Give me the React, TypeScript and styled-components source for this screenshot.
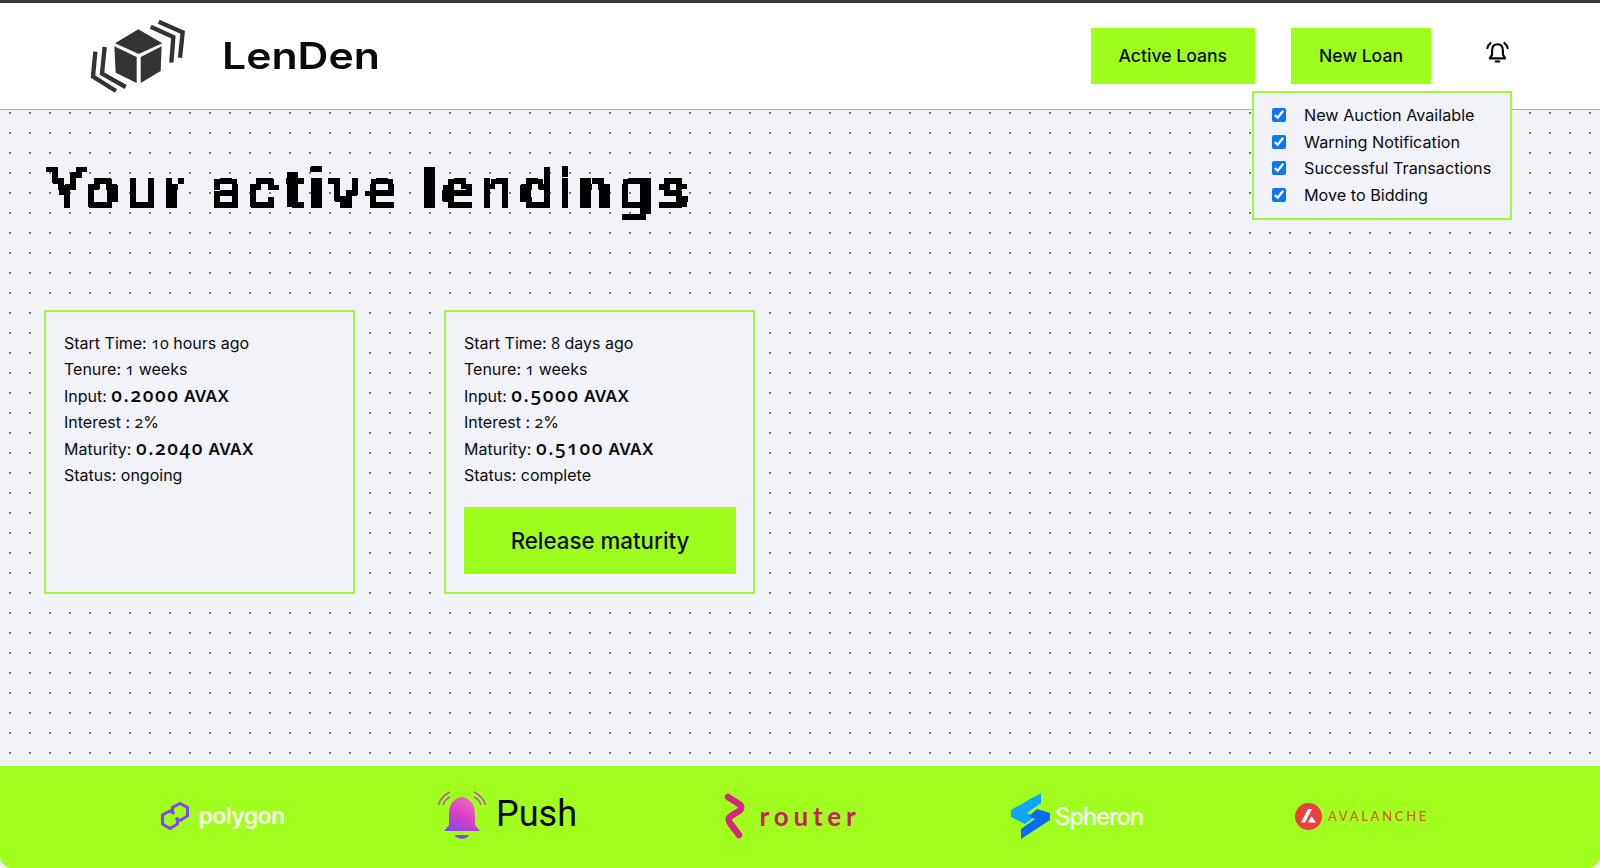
import React from "react";
import styled, { createGlobalStyle } from "styled-components";

const Global = createGlobalStyle`
  html, body { margin: 0; padding: 0; background: #10131c; }
  body { font-family: Inter, "Liberation Sans", sans-serif; color: #0b0b0b; }
  * { box-sizing: border-box; }
`;

const Page = styled.div`
  height: 868px;
  overflow: hidden;
  display: flex;
  flex-direction: column;
  border-top: 3px solid #3a3a3c;
  background-color: #f2f2f9;
  background-image: radial-gradient(circle at 10px 10px, #77777c 0, #77777c 0.9px, transparent 1.3px);
  background-size: 20px 20px;
  background-origin: padding-box;
`;

const Header = styled.header`
  position: relative;
  height: 107px;
  flex: none;
  display: flex;
  align-items: center;
  justify-content: space-between;
  padding: 0 90px 0 80px;
  background: #fff;
  border-bottom: 1px solid #b4b4b8;
`;

const Brand = styled.div`
  display: flex;
  align-items: center;
  gap: 22px;
`;

const BrandName = styled.span`
  display: inline-block;
  margin-top: -2px;
  font-size: 37px;
  font-weight: 600;
  color: #0a0a0a;
  transform: scaleX(1.155);
  transform-origin: left center;
`;

const Nav = styled.nav`
  display: flex;
  align-items: center;
`;

const NavButton = styled.button`
  height: 56px;
  margin-right: 36px;
  padding: 0 28px 2px;
  border: 0;
  background: #9eff1f;
  font: 500 17.6px Inter, "Liberation Sans", sans-serif;
  color: #0b0b0b;
`;

const BellButton = styled.div`
  display: flex;
  margin: -8px 0 0 18px;
`;

const Menu = styled.div`
  position: absolute;
  z-index: 2;
  top: 88px;
  right: 88px;
  width: 260px;
  height: 129px;
  padding: 9px 18px;
  display: flex;
  flex-direction: column;
  background: #f2f2f9;
  border: 2px solid #a4f53f;
`;

const MenuRow = styled.label`
  flex: none;
  height: 26.6px;
  display: flex;
  align-items: center;
  gap: 18px;
  font-size: 16.2px;
  white-space: nowrap;
`;

const Check = styled.input`
  width: 14px;
  height: 14px;
  margin: 0;
  accent-color: #0b76fb;
`;

const Main = styled.main`
  flex: 1;
  padding: 44px 44px 0;
`;

const Title = styled.h1`
  margin: 0 0 84px 2px;
  height: 72px;
  font-family: Inter, sans-serif;
  font-size: 56px;
  font-weight: 600;
  line-height: 72px;
  letter-spacing: 4.9px;
  color: #000;
  white-space: nowrap;
  filter: url(#pixelate);
`;

const Cards = styled.section`
  display: flex;
  gap: 89px;
`;

const Card = styled.article`
  width: 311px;
  height: 284px;
  padding: 17.5px 18px;
  border: 2px solid #a4f53f;
  background: #f2f2f9;
`;

const Line = styled.div`
  height: 26.6px;
  line-height: 26.6px;
  font-size: 16px;
  white-space: nowrap;
`;

const Num = styled.span`
  font-family: "Open Sans", sans-serif;
  font-variant-numeric: oldstyle-nums;
  font-feature-settings: "onum";
  line-height: 0;
`;

const Strong = styled.b`
  font-weight: 600;
  font-size: 16.5px;
  line-height: 0;
  ${Num} {
    font-size: 19px;
    letter-spacing: 1.6px;
  }
`;

const Release = styled.button`
  display: block;
  width: 272px;
  height: 67px;
  margin-top: 17.5px;
  border: 0;
  background: #9eff1f;
  font: 500 22.3px Inter, "Liberation Sans", sans-serif;
  color: #0b0b0b;
`;

const Footer = styled.footer`
  height: 102px;
  flex: none;
  display: grid;
  grid-template-columns: repeat(5, 285px);
  justify-content: center;
  align-items: center;
  padding: 0 16px 0 0;
  background: #a0ff1f;
  border-radius: 0 0 12px 12px;
`;

const Sponsor = styled.div`
  display: flex;
  align-items: center;
  justify-content: center;
  margin-top: -2px;
`;

const PolygonWord = styled.span`
  margin-left: 9px;
  font: 600 23px Inter, sans-serif;
  letter-spacing: -0.6px;
  color: #f8fff0;
`;

const PushWord = styled.span`
  margin: -4px 0 0 9px;
  font: 400 36px Roboto, sans-serif;
  color: #050505;
`;

const RouterWord = styled.span`
  margin-left: 14px;
  font: 700 26px Lato, sans-serif;
  letter-spacing: 4.8px;
  color: #c2265f;
`;

const SpheronWord = styled.span`
  margin-left: 4px;
  font: 500 24px Inter, sans-serif;
  letter-spacing: -1.2px;
  color: #f8fff0;
`;

const AvalancheWord = styled.span`
  margin-left: 6px;
  font: 500 13px Lato, sans-serif;
  letter-spacing: 2.7px;
  color: #dc5a2a;
`;

const HiddenDefs = styled.svg`
  position: absolute;
  width: 0;
  height: 0;
`;

const Logo = () => (
  <svg width="120" height="90" viewBox="0 0 360 270" fill="#333" aria-hidden>
    <polygon points="175,55 247,97 176,129 105,97" />
    <polygon points="103,106 170,138 170,216 107,185" />
    <polygon points="182,138 245,106 242,180 182,216" />
    <g fill="none" stroke="#333" strokeWidth="13">
      <polyline points="236,32 308,64 300,140" />
      <polyline points="212,47 280,78 274,155" />
      <polyline points="46,122 39,197 108,240" />
      <polyline points="74,108 66,188 137,228" />
    </g>
  </svg>
);

const BellIcon = () => (
  <svg width="25" height="25" viewBox="0 0 24 24" fill="none" stroke="#000" strokeWidth="2" aria-hidden>
    <path d="M12 4 C8 4 6.8 7 6.8 10 V14 L4.6 17.6 H19.4 L17.2 14 V10 C17.2 7 16 4 12 4 Z" strokeLinejoin="round" />
    <path d="M10.3 20.6 H13.7" strokeLinecap="round" />
    <path d="M2 8.5 C2.5 6 3.8 3.8 6 2.2" />
    <path d="M22 8.5 C21.5 6 20.2 3.8 18 2.2" />
  </svg>
);

const PolygonIcon = () => (
  <svg width="30" height="28" viewBox="0 0 30 28" fill="none" stroke="#8247e5" strokeWidth="3" strokeLinejoin="miter" aria-hidden>
    <path d="M14.5 11.5 L10 9 L2.5 13 V22 L10 26.5 L17.5 22 V15.5" />
    <path d="M15.5 16.5 L20 18.5 L27.5 14 V5.5 L20 1.5 L12.5 5.5 V12" />
  </svg>
);

const PushIcon = () => (
  <svg width="50" height="52" viewBox="0 0 50 52" fill="none" aria-hidden>
    <defs>
      <linearGradient id="pushGrad" x1="0.8" y1="0.1" x2="0.2" y2="1">
        <stop offset="0" stopColor="#f06ab8" />
        <stop offset="0.5" stopColor="#d93fc6" />
        <stop offset="1" stopColor="#8a47ea" />
      </linearGradient>
    </defs>
    <path d="M25 7 C29 7 30 9 32 10 C37 13 38 19 38 27 V35 L43 41 H7 L12 35 V27 C12 19 13 13 18 10 C20 9 21 7 25 7 Z" fill="url(#pushGrad)" />
    <path d="M18 45 H32 C31 50 19 50 18 45 Z" fill="#8a47ea" />
    <g stroke="#b9609b" strokeWidth="1.6">
      <path d="M1.5 15 C3 9 7 5 13 2" />
      <path d="M6 15 C7 12 9 9 13 7" />
      <path d="M48.5 15 C47 9 43 5 37 2" />
      <path d="M44 15 C43 12 41 9 37 7" />
    </g>
  </svg>
);

const RouterIcon = () => (
  <svg width="22" height="46" viewBox="0 0 22 46" fill="none" aria-hidden>
    <path d="M4 4 L15 11 C18 13 18 16 15 18 L7 23 C4 25 4 27 6 30 L15 42" stroke="#d4277e" strokeWidth="6.5" strokeLinecap="round" />
  </svg>
);

const SpheronIcon = () => (
  <svg width="40" height="46" viewBox="0 0 40 46" aria-hidden>
    <polygon points="30,0 30,10 16,20 24,24 14,31 0,24 0,17" fill="#0ea5ff" />
    <polygon points="39,20 39,27 10,46 10,36 24,26 18,23 26,16" fill="#0b6cf5" />
  </svg>
);

const AvalancheIcon = () => (
  <svg width="27" height="27" viewBox="0 0 27 27" aria-hidden>
    <circle cx="13.5" cy="13.5" r="13.5" fill="#e84142" />
    <polygon points="13,6 17,6 10,19.5 6,19.5" fill="#fff" />
    <polygon points="16.5,13 21,19.5 13,19.5" fill="#fff" />
  </svg>
);

const options = ["New Auction Available", "Warning Notification", "Successful Transactions", "Move to Bidding"];

const LoanCard = ({
  start, input, maturity, status, action,
}: { start: React.ReactNode; input: string; maturity: string; status: string; action?: boolean }) => (
  <Card>
    <Line>Start Time: {start}</Line>
    <Line>Tenure: <Num>1</Num> weeks</Line>
    <Line>Input: <Strong><Num>{input}</Num> AVAX</Strong></Line>
    <Line>Interest : <Num>2</Num>%</Line>
    <Line>Maturity: <Strong><Num>{maturity}</Num> AVAX</Strong></Line>
    <Line>Status: {status}</Line>
    {action && <Release>Release maturity</Release>}
  </Card>
);

export default function App() {
  return (
    <Page>
      <Global />
      <HiddenDefs aria-hidden>
        <filter id="pixelate" x="0" y="0" width="100%" height="100%" colorInterpolationFilters="sRGB">
          <feFlood x="2" y="2" width="2" height="2" />
          <feComposite width="6" height="6" />
          <feTile result="grid" />
          <feComposite in="SourceGraphic" in2="grid" operator="in" />
          <feComponentTransfer>
            <feFuncA type="discrete" tableValues="0 1 1 1" />
          </feComponentTransfer>
          <feMorphology operator="dilate" radius="2" />
        </filter>
      </HiddenDefs>
      <Header>
        <Brand>
          <Logo />
          <BrandName>LenDen</BrandName>
        </Brand>
        <Nav>
          <NavButton>Active Loans</NavButton>
          <NavButton>New Loan</NavButton>
          <BellButton><BellIcon /></BellButton>
        </Nav>
        <Menu>
          {options.map((o) => (
            <MenuRow key={o}><Check type="checkbox" defaultChecked />{o}</MenuRow>
          ))}
        </Menu>
      </Header>
      <Main>
        <Title>Your active lendings</Title>
        <Cards>
          <LoanCard start={<><Num>10</Num> hours ago</>} input="0.2000" maturity="0.2040" status="ongoing" />
          <LoanCard start={<><Num>8</Num> days ago</>} input="0.5000" maturity="0.5100" status="complete" action />
        </Cards>
      </Main>
      <Footer>
        <Sponsor><PolygonIcon /><PolygonWord>polygon</PolygonWord></Sponsor>
        <Sponsor><PushIcon /><PushWord>Push</PushWord></Sponsor>
        <Sponsor><RouterIcon /><RouterWord>router</RouterWord></Sponsor>
        <Sponsor><SpheronIcon /><SpheronWord>Spheron</SpheronWord></Sponsor>
        <Sponsor><AvalancheIcon /><AvalancheWord>AVALANCHE</AvalancheWord></Sponsor>
      </Footer>
    </Page>
  );
}
